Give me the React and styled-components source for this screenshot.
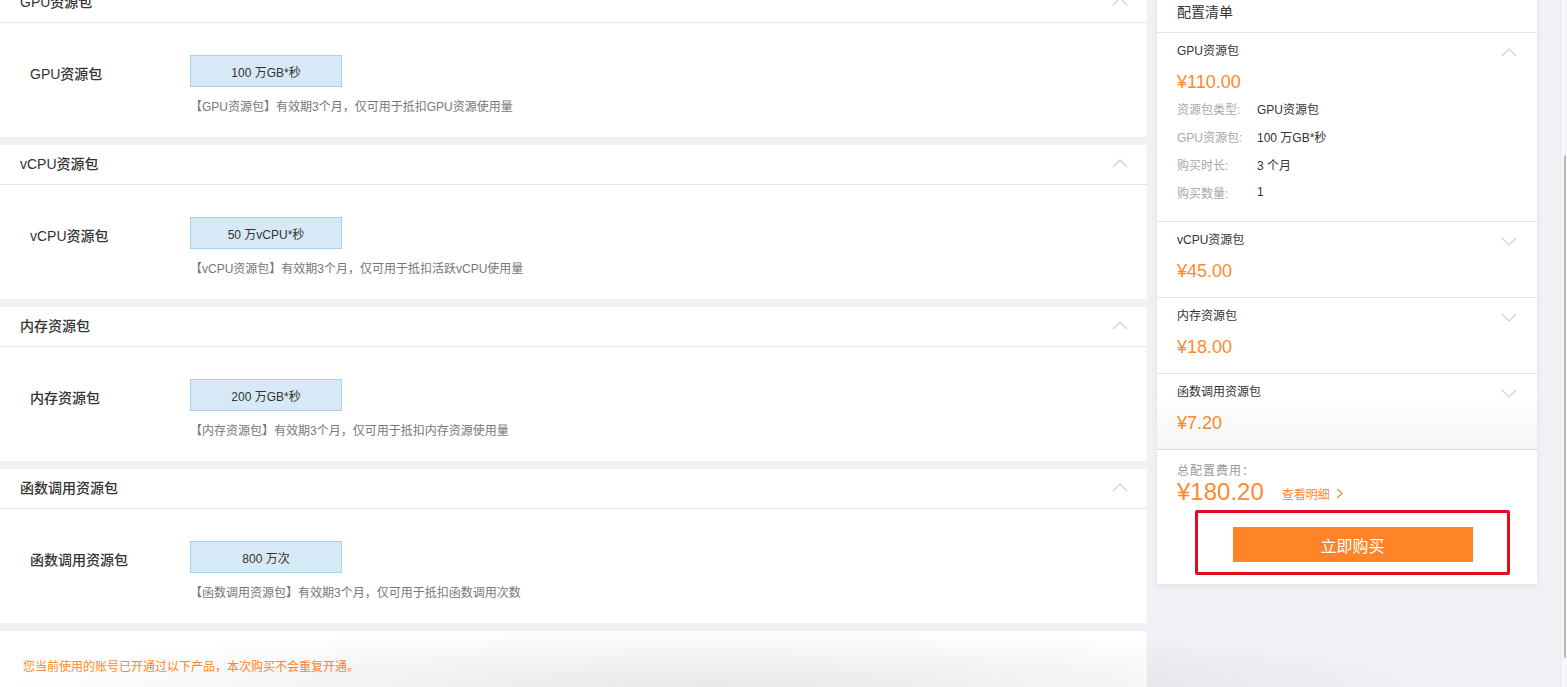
import React from "react";
import styled, { createGlobalStyle } from "styled-components";

const Global = createGlobalStyle`
  html, body { margin: 0; padding: 0; }
  body {
    background: #f0f1f4;
    overflow: hidden;
    font-family: "Liberation Sans", "Noto Sans CJK SC", sans-serif;
    color: #333;
  }
`;

const Page = styled.div`
  display: flex;
  align-items: flex-start;
  gap: 10px;
  margin-top: -17px;
  height: 720px;
`;

const LeftCol = styled.div`
  width: 1147px;
  display: flex;
  flex-direction: column;
  gap: 8px;
  flex: none;
`;

const Panel = styled.section`
  background: #fff;
`;

const PanelHeader = styled.div`
  height: 40px;
  box-sizing: border-box;
  padding: 0 19px 3px 20px;
  border-bottom: 1px solid #e6e6e6;
  display: flex;
  align-items: center;
  justify-content: space-between;
  font-size: 14px;
  font-weight: 500;
  color: #333;
`;

const PanelBody = styled.div`
  height: 114px;
  box-sizing: border-box;
  padding: 32px 0 0 30px;
`;

const Row = styled.div`
  display: flex;
  align-items: center;
`;

const Label = styled.div`
  width: 160px;
  font-size: 14px;
  font-weight: 500;
  color: #333;
  padding-top: 4px;
`;

const OptionBox = styled.div`
  width: 150px;
  height: 30px;
  background: #d7e9f6;
  border: 1px solid #a8d1ee;
  display: flex;
  align-items: center;
  justify-content: center;
  font-size: 12px;
  color: #333;
`;

const Desc = styled.div`
  margin: 10px 0 0 160px;
  font-size: 12px;
  line-height: 20px;
  color: #777;
`;

const NoticePanel = styled.section`
  background: #fff;
  height: 80px;
  padding: 26px 0 0 23px;
  box-sizing: border-box;
  font-size: 12px;
  color: #ff8a2a;
`;

const Card = styled.aside`
  width: 380px;
  flex: none;
  margin-top: 10px;
  background: #fff;
  box-shadow: 0 1px 6px rgba(0, 0, 0, 0.07);
`;

const CardHeader = styled.div`
  height: 40px;
  box-sizing: border-box;
  border-bottom: 1px solid #e3e3e3;
  padding: 0 20px 4px;
  display: flex;
  align-items: center;
  font-size: 14px;
  color: #333;
`;

const List = styled.div`
  position: relative;
  &::after {
    content: "";
    position: absolute;
    left: 0;
    right: 0;
    bottom: 0;
    height: 56px;
    background: linear-gradient(rgba(0, 0, 0, 0), rgba(0, 0, 0, 0.04));
    pointer-events: none;
  }
`;

const Item = styled.div`
  border-bottom: 1px solid #e3e3e3;
  padding: 6px 20px ${(p) => (p.$open ? "15px" : "14px")};
`;

const ItemHead = styled.div`
  display: flex;
  justify-content: space-between;
  align-items: center;
  height: 20px;
  font-size: 12px;
  color: #333;
  svg {
    margin-top: 6px;
  }
`;

const Price = styled.div`
  margin-top: 11px;
  height: 24px;
  line-height: 24px;
  font-size: 18px;
  color: #ff8a2b;
`;

const Detail = styled.div`
  display: flex;
  height: 28px;
  align-items: center;
  font-size: 12px;
`;

const DetailKey = styled.span`
  width: 80px;
  color: #a8a8a8;
`;

const DetailVal = styled.span`
  color: #333;
`;

const Footer = styled.div`
  padding: 13px 20px 9px;
`;

const TotalLabel = styled.div`
  font-size: 12px;
  line-height: 16px;
  color: #999;
  letter-spacing: 1px;
`;

const TotalRow = styled.div`
  display: flex;
  align-items: center;
  height: 26px;
`;

const Total = styled.span`
  font-size: 24px;
  color: #ff8a2b;
  margin-right: 18px;
`;

const DetailLink = styled.span`
  font-size: 12px;
  color: #ff8a2b;
  display: flex;
  align-items: center;
  gap: 6px;
  padding-top: 2px;
`;

const Highlight = styled.div`
  margin: 5px 0 0 18px;
  width: 315px;
  height: 65px;
  box-sizing: border-box;
  border: 3px solid #e60a1e;
  border-radius: 2px;
  display: flex;
  align-items: center;
  justify-content: center;
`;

const BuyButton = styled.button`
  width: 240px;
  height: 35px;
  border: none;
  background: #ff8427;
  color: #fff;
  font-family: inherit;
  font-size: 16px;
  margin-top: 4px;
  padding: 0;
  cursor: pointer;
`;

const BottomShade = styled.div`
  position: fixed;
  left: 0;
  width: 1420px;
  bottom: 0;
  height: 60px;
  pointer-events: none;
  background: radial-gradient(ellipse 50% 100% at 50% 100%, rgba(0, 0, 0, 0.09), rgba(0, 0, 0, 0) 100%);
`;

const ScrollTrack = styled.div`
  position: fixed;
  top: 0;
  right: 0;
  width: 6px;
  height: 100%;
  background: #f6f6f8;
  border-left: 1px solid #e9e9ee;
`;

const ScrollThumb = styled.div`
  position: absolute;
  top: 155px;
  left: 3px;
  width: 2px;
  height: 503px;
  background: #b8b8b8;
  border-radius: 1px;
`;

const Chevron = ({ up }) => (
  <svg width="16" height="9" viewBox="0 0 16 9" fill="none">
    <polyline
      points={up ? "1,8 8,1 15,8" : "1,1 8,8 15,1"}
      stroke="#cfcfcf"
      strokeWidth="1.2"
    />
  </svg>
);

const packs = [
  { name: "GPU资源包", value: "100 万GB*秒", desc: "【GPU资源包】有效期3个月，仅可用于抵扣GPU资源使用量" },
  { name: "vCPU资源包", value: "50 万vCPU*秒", desc: "【vCPU资源包】有效期3个月，仅可用于抵扣活跃vCPU使用量" },
  { name: "内存资源包", value: "200 万GB*秒", desc: "【内存资源包】有效期3个月，仅可用于抵扣内存资源使用量" },
  { name: "函数调用资源包", value: "800 万次", desc: "【函数调用资源包】有效期3个月，仅可用于抵扣函数调用次数" },
];

const items = [
  {
    name: "GPU资源包",
    price: "¥110.00",
    open: true,
    details: [
      ["资源包类型:", "GPU资源包"],
      ["GPU资源包:", "100 万GB*秒"],
      ["购买时长:", "3 个月"],
      ["购买数量:", "1"],
    ],
  },
  { name: "vCPU资源包", price: "¥45.00" },
  { name: "内存资源包", price: "¥18.00" },
  { name: "函数调用资源包", price: "¥7.20" },
];

export default function App() {
  return (
    <>
      <Global />
      <Page>
        <LeftCol>
          {packs.map((p) => (
            <Panel key={p.name}>
              <PanelHeader>
                <span>{p.name}</span>
                <Chevron up />
              </PanelHeader>
              <PanelBody>
                <Row>
                  <Label>{p.name}</Label>
                  <OptionBox>{p.value}</OptionBox>
                </Row>
                <Desc>{p.desc}</Desc>
              </PanelBody>
            </Panel>
          ))}
          <NoticePanel>您当前使用的账号已开通过以下产品，本次购买不会重复开通。</NoticePanel>
        </LeftCol>
        <Card>
          <CardHeader>配置清单</CardHeader>
          <List>
            {items.map((it) => (
              <Item key={it.name} $open={it.open}>
                <ItemHead>
                  <span>{it.name}</span>
                  <Chevron up={it.open} />
                </ItemHead>
                <Price>{it.price}</Price>
                {it.details &&
                  it.details.map(([k, v]) => (
                    <Detail key={k}>
                      <DetailKey>{k}</DetailKey>
                      <DetailVal>{v}</DetailVal>
                    </Detail>
                  ))}
              </Item>
            ))}
          </List>
          <Footer>
            <TotalLabel>总配置费用：</TotalLabel>
            <TotalRow>
              <Total>¥180.20</Total>
              <DetailLink>
                查看明细
                <svg width="7" height="11" viewBox="0 0 7 11" fill="none">
                  <polyline points="1,1 6,5.5 1,10" stroke="#ff8a2b" strokeWidth="1.2" />
                </svg>
              </DetailLink>
            </TotalRow>
            <Highlight>
              <BuyButton>立即购买</BuyButton>
            </Highlight>
          </Footer>
        </Card>
      </Page>
      <BottomShade />
      <ScrollTrack>
        <ScrollThumb />
      </ScrollTrack>
    </>
  );
}
